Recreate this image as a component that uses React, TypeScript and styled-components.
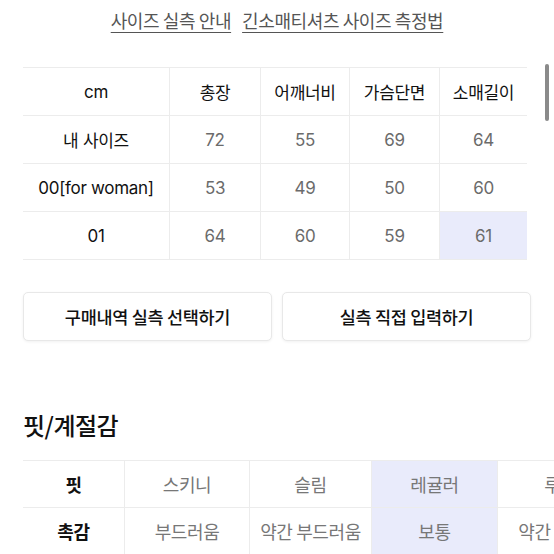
import styled, { createGlobalStyle } from "styled-components";

const GlobalStyle = createGlobalStyle`
  html, body {
    margin: 0;
    padding: 0;
    background: #fff;
    overflow: hidden;
  }
  body {
    font-family: "Inter", "Noto Sans CJK KR", sans-serif;
    color: #111;
  }
`;

const Page = styled.div`
  width: 554px;
  height: 554px;
  position: relative;
  overflow: hidden;
  background: #fff;
`;

const Links = styled.div`
  display: flex;
  justify-content: center;
  gap: 11px;
  padding-top: 6px;
  height: 67px;
  box-sizing: border-box;
`;

const GuideLink = styled.a`
  font-family: "Noto Sans CJK KR", sans-serif;
  font-size: 18px;
  line-height: 28px;
  color: #555;
  text-decoration: underline;
  text-underline-offset: 4px;
  text-decoration-thickness: 1px;
  letter-spacing: -0.4px;
`;

const SizeTable = styled.div`
  margin-left: 23px;
  width: 504px;
  display: grid;
  grid-template-columns: 147px 91px 89px 90px 87px;
  border-top: 1px solid #ececec;
`;

const Cell = styled.div<{ $head?: boolean; $hl?: boolean; $last?: boolean }>`
  height: 47px;
  display: flex;
  align-items: center;
  justify-content: center;
  border-bottom: 1px solid #ececec;
  border-right: ${(p) => (p.$last ? "none" : "1px solid #ececec")};
  background: ${(p) => (p.$hl ? "#e9ebfb" : "#fff")};
  color: ${(p) => (p.$head ? "#111" : "#6b6b6b")};
  font-size: 17px;
  letter-spacing: -0.3px;
`;

const ScrollThumb = styled.div`
  position: absolute;
  left: 545px;
  top: 64px;
  width: 4px;
  height: 57px;
  border-radius: 2px;
  background: #8a8a8a;
`;

const ButtonRow = styled.div`
  display: flex;
  gap: 10px;
  margin: 32px 0 0 23px;
`;

const ActionButton = styled.button`
  width: 249px;
  height: 49px;
  border: 1px solid #e8e8e8;
  border-radius: 5px;
  background: #fff;
  box-shadow: 0 1px 3px rgba(0, 0, 0, 0.06);
  font-family: "Noto Sans CJK KR", sans-serif;
  font-size: 17.5px;
  font-weight: 500;
  color: #111;
  letter-spacing: -0.3px;
`;

const SectionTitle = styled.h2`
  margin: 68px 0 0 23px;
  font-family: "Noto Sans CJK KR", sans-serif;
  font-size: 24px;
  line-height: 32px;
  font-weight: 500;
  letter-spacing: -0.5px;
`;

const FitTable = styled.div`
  margin: 19px 0 0 23px;
  width: 620px;
  display: grid;
  grid-template-columns: 102px 125px 122px 126px 126px;
  border-top: 1px solid #ececec;
`;

const FitCell = styled.div<{ $head?: boolean; $hl?: boolean }>`
  height: 46px;
  display: flex;
  align-items: center;
  justify-content: center;
  border-bottom: 1px solid #ececec;
  border-right: 1px solid #ececec;
  background: ${(p) => (p.$hl ? "#e9ebfb" : "#fff")};
  color: ${(p) => (p.$head ? "#111" : "#777")};
  font-family: "Noto Sans CJK KR", sans-serif;
  font-weight: ${(p) => (p.$head ? 600 : 400)};
  font-size: 18px;
  letter-spacing: -0.4px;
  white-space: nowrap;
`;

const header = ["cm", "총장", "어깨너비", "가슴단면", "소매길이"];
const rows = [
  ["내 사이즈", "72", "55", "69", "64"],
  ["00[for woman]", "53", "49", "50", "60"],
  ["01", "64", "60", "59", "61"],
];

const fitRows = [
  ["핏", "스키니", "슬림", "레귤러", "루즈"],
  ["촉감", "부드러움", "약간 부드러움", "보통", "약간 뻣뻣함"],
];

export default function App() {
  return (
    <Page>
      <GlobalStyle />
      <Links>
        <GuideLink>사이즈 실측 안내</GuideLink>
        <GuideLink>긴소매티셔츠 사이즈 측정법</GuideLink>
      </Links>
      <SizeTable>
        {header.map((h, i) => (
          <Cell key={h} $head $last={i === 4}>
            {h}
          </Cell>
        ))}
        {rows.map((r, ri) =>
          r.map((v, i) => (
            <Cell
              key={`${ri}-${i}`}
              $head={i === 0}
              $last={i === 4}
              $hl={ri === 2 && i === 4}
            >
              {v}
            </Cell>
          ))
        )}
      </SizeTable>
      <ScrollThumb />
      <ButtonRow>
        <ActionButton>구매내역 실측 선택하기</ActionButton>
        <ActionButton>실측 직접 입력하기</ActionButton>
      </ButtonRow>
      <SectionTitle>핏/계절감</SectionTitle>
      <FitTable>
        {fitRows.map((r, ri) =>
          r.map((v, i) => (
            <FitCell key={`${ri}-${i}`} $head={i === 0} $hl={i === 3}>
              {v}
            </FitCell>
          ))
        )}
      </FitTable>
    </Page>
  );
}
